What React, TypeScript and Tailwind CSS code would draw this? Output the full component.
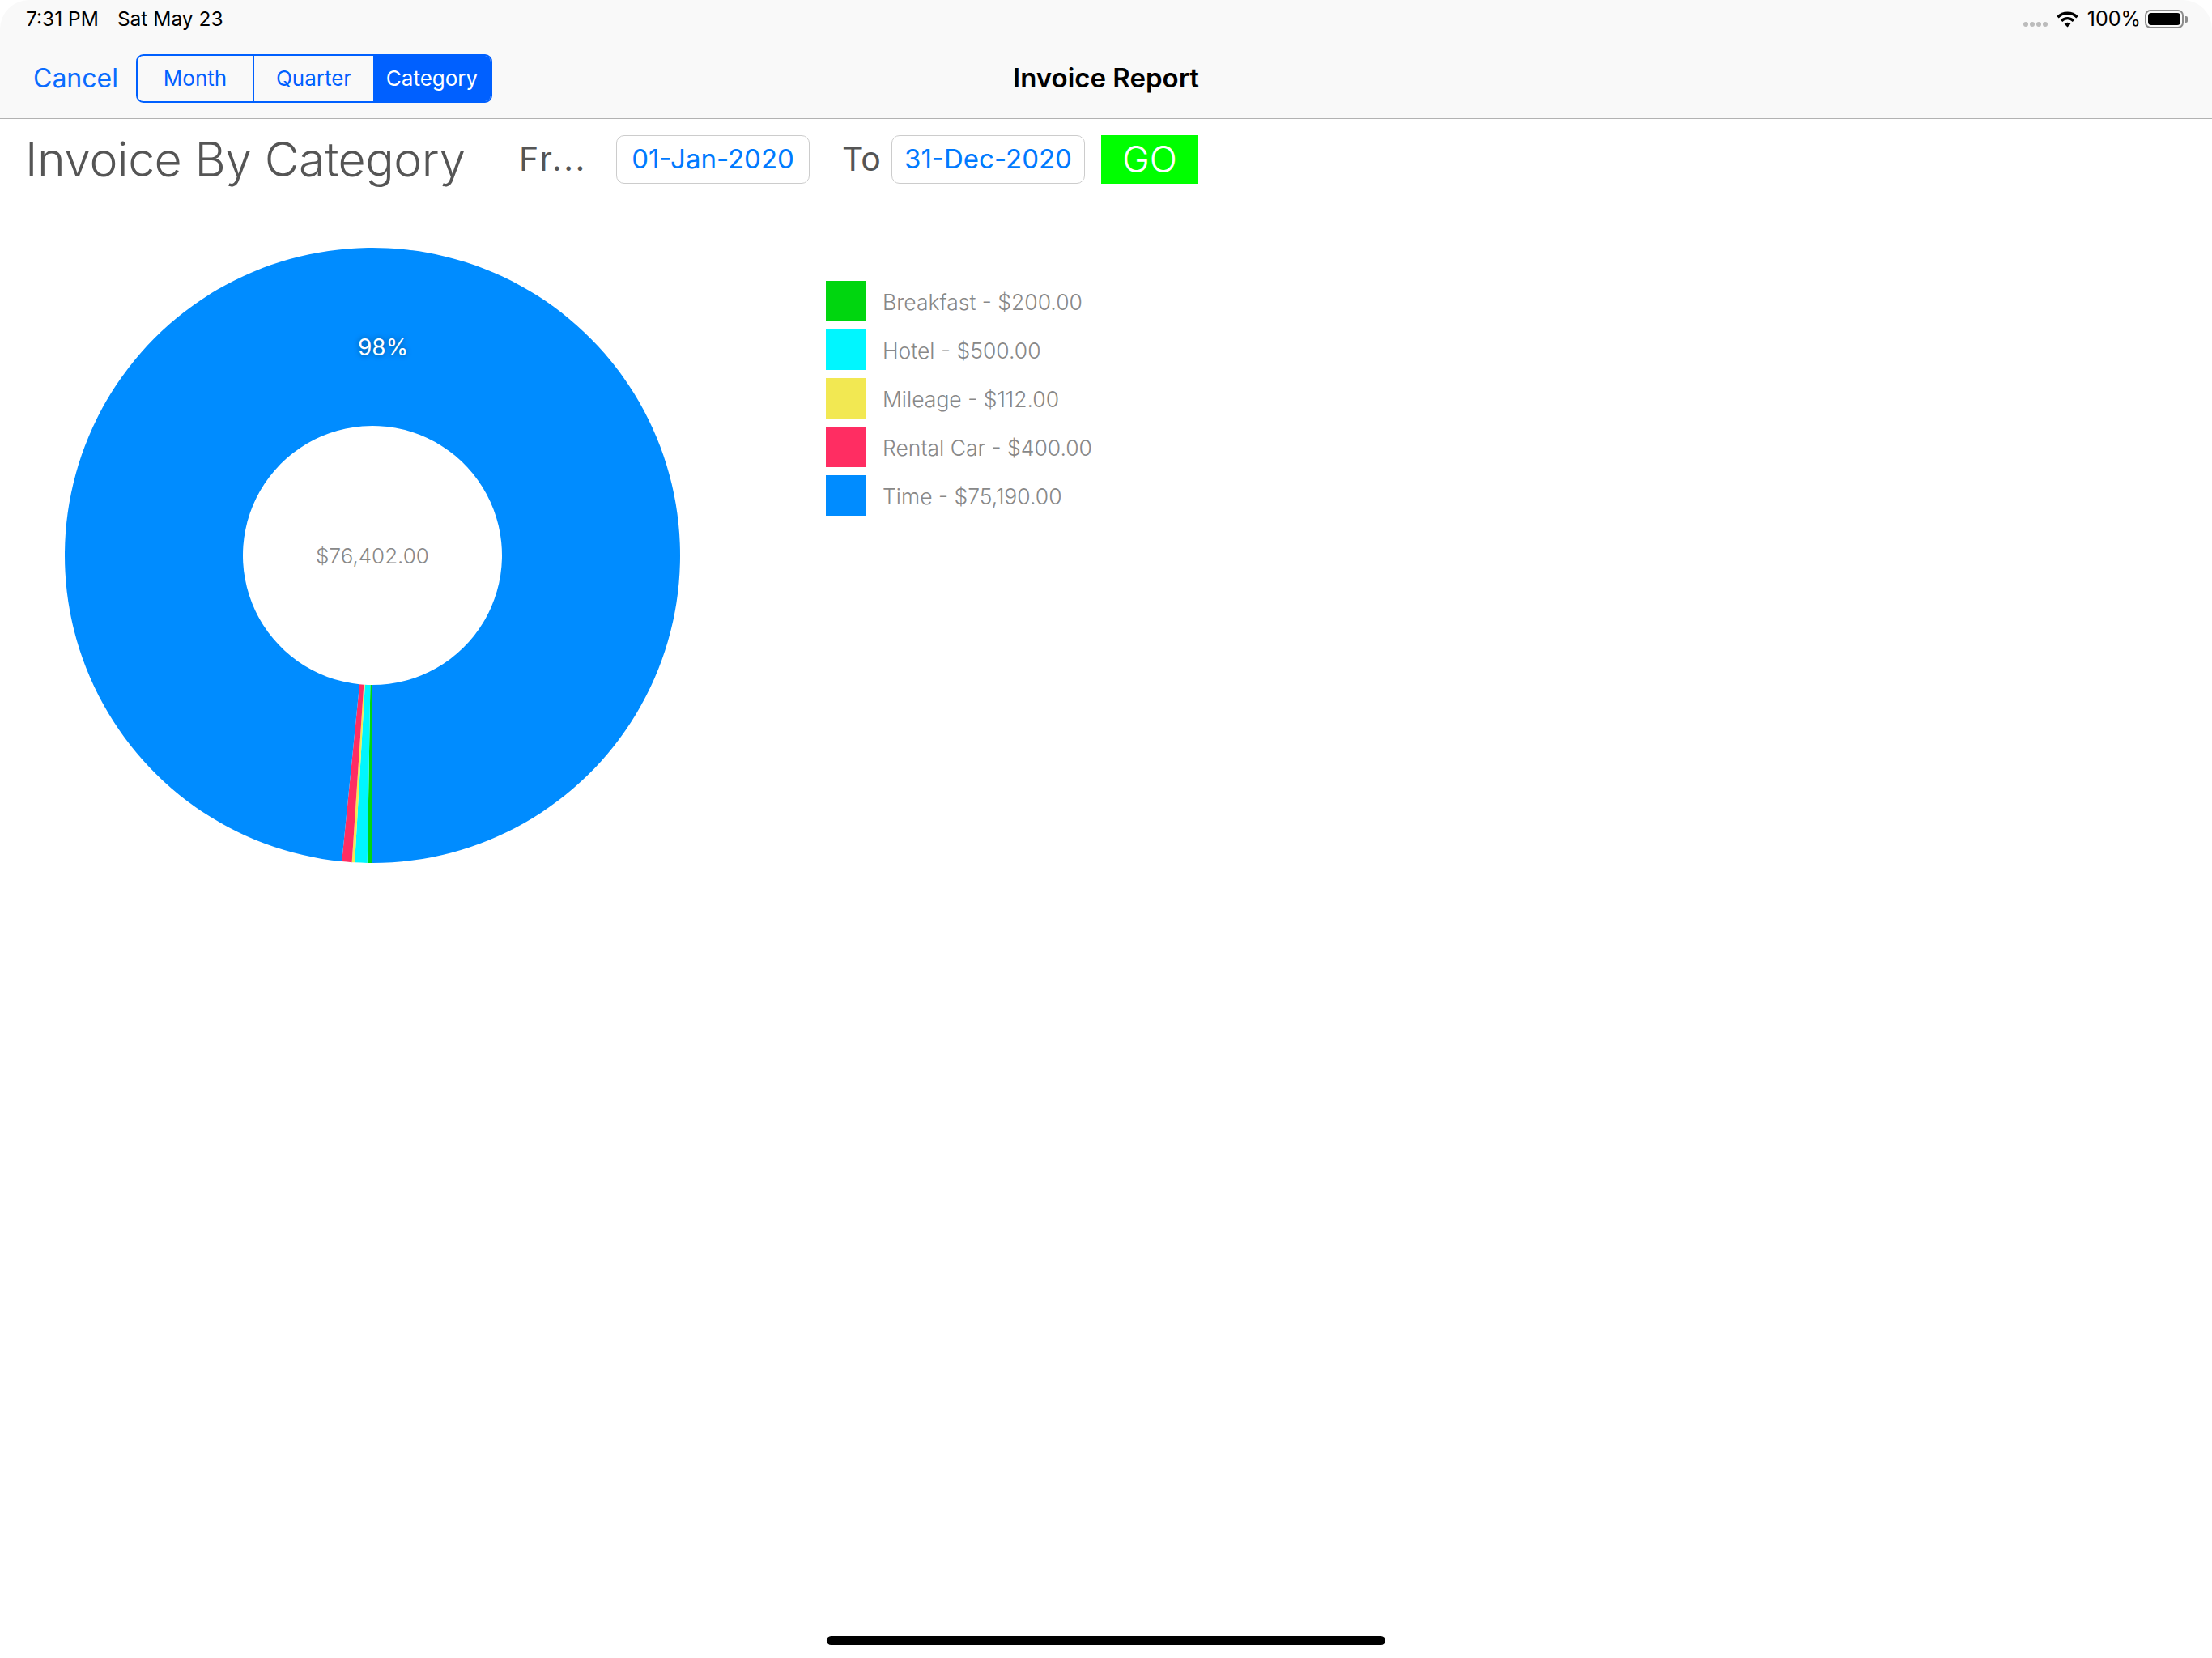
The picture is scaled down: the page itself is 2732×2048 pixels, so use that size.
const slices = [
  { name: "Breakfast", amount: "$200.00", value: 200, swatch: "bg-[#00d60f]", color: "#00d60f" },
  { name: "Hotel", amount: "$500.00", value: 500, swatch: "bg-[#00f6ff]", color: "#00f6ff" },
  { name: "Mileage", amount: "$112.00", value: 112, swatch: "bg-[#f2e852]", color: "#f2e852" },
  { name: "Rental Car", amount: "$400.00", value: 400, swatch: "bg-[#ff2d62]", color: "#ff2d62" },
  { name: "Time", amount: "$75,190.00", value: 75190, swatch: "bg-[#008cff]", color: "#008cff" },
];

const total = slices.reduce((sum, s) => sum + s.value, 0);

// angle runs clockwise from 6 o'clock, like the chart in the app
function point(r: number, angle: number) {
  return `${380 - r * Math.sin(angle)} ${380 + r * Math.cos(angle)}`;
}

function wedge(start: number, end: number) {
  const large = end - start > Math.PI ? 1 : 0;
  return `M ${point(380, start)} A 380 380 0 ${large} 1 ${point(380, end)} L ${point(160, end)} A 160 160 0 ${large} 0 ${point(160, start)} Z`;
}

function Donut() {
  let angle = 0;
  return (
    <div className="relative w-[760px] h-[760px] shrink-0">
      <svg width="760" height="760" viewBox="0 0 760 760">
        {slices.map((s) => {
          const start = angle;
          angle += (s.value / total) * Math.PI * 2;
          return <path key={s.name} d={wedge(start, angle)} fill={s.color} />;
        })}
      </svg>
      <span className="absolute left-[362px] top-[106px] text-[28px] leading-[34px] font-normal text-white [text-shadow:0_0_6px_#00508f]">
        98%
      </span>
      <span className="absolute inset-x-0 top-[364px] text-center text-[26px] leading-[34px] font-light text-[#888888]">
        $76,402.00
      </span>
    </div>
  );
}

function Wifi() {
  return (
    <svg width="27" height="20" viewBox="0 0 27 20" className="shrink-0">
      <path d="M1.5 7.2 A17 17 0 0 1 25.5 7.2" fill="none" stroke="#000" strokeWidth="3.4" />
      <path d="M6 11.7 A10.6 10.6 0 0 1 21 11.7" fill="none" stroke="#000" strokeWidth="3.4" />
      <path d="M9.6 15.4 A5.5 5.5 0 0 1 17.4 15.4 L13.5 19.6 Z" fill="#000" />
    </svg>
  );
}

function Battery() {
  return (
    <div className="flex items-center gap-[2px]">
      <div className="w-[48px] h-[23px] rounded-[7px] border-2 border-[#8c8c8c] p-[2px]">
        <div className="w-full h-full rounded-[4px] bg-black" />
      </div>
      <div className="w-[3px] h-[8px] rounded-r-[2px] bg-[#8c8c8c]" />
    </div>
  );
}

export default function App() {
  return (
    <div className="w-[2732px] h-[2048px] flex flex-col bg-white font-['Inter',sans-serif]">
      <header className="bg-[#f9f9f9] border-b border-[#b2b2b2] rounded-t-[36px]">
        {/* Status bar */}
        <div className="h-[47px] pl-[32px] pr-[30px] flex items-center justify-between text-[24px] text-black">
          <div className="flex gap-[23px] text-[24.5px]">
            <span>7:31 PM</span>
            <span>Sat May 23</span>
          </div>
          <div className="flex items-center">
            <div className="flex gap-[2px] mt-[13px] mr-[11px]">
              <div className="w-[6px] h-[6px] rounded-full bg-[#bcbcbc]" />
              <div className="w-[6px] h-[6px] rounded-full bg-[#bcbcbc]" />
              <div className="w-[6px] h-[6px] rounded-full bg-[#bcbcbc]" />
              <div className="w-[6px] h-[6px] rounded-full bg-[#bcbcbc]" />
            </div>
            <Wifi />
            <span className="ml-[11px] mr-[5px] text-[25px]">100%</span>
            <Battery />
          </div>
        </div>

        {/* Nav bar */}
        <div className="h-[99px] grid grid-cols-[1fr_auto_1fr] items-center">
          <div className="flex items-center pl-[41px]">
            <span className="w-[127px] text-[32px] text-[#0a6cff]">Cancel</span>
            <div className="w-[440px] h-[60px] flex rounded-[9px] border-2 border-[#0060ff] overflow-hidden text-[26px]">
              <div className="w-[144px] border-r-2 border-[#0060ff] flex items-center justify-center text-[#0060ff]">Month</div>
              <div className="w-[147px] flex items-center justify-center text-[#0060ff]">Quarter</div>
              <div className="flex-1 bg-[#0060ff] flex items-center justify-center text-white">Category</div>
            </div>
          </div>
          <h1 className="text-[33px] font-semibold text-black">Invoice Report</h1>
          <div />
        </div>
      </header>

      {/* Report toolbar */}
      <div className="mt-[20px] h-[60px] flex items-center text-[#555555]">
        <h2 className="ml-[31px] w-[610px] text-[59px] font-light tracking-[-0.5px] whitespace-nowrap">Invoice By Category</h2>
        <span className="w-[120px] text-[41px] tracking-[2.5px]">Fr...</span>
        <div className="w-[239px] h-[60px] rounded-[10px] border border-[#cccccc] flex items-center justify-center text-[33px] text-[#007aff]">01-Jan-2020</div>
        <span className="ml-[40px] w-[61px] text-[41px]">To</span>
        <div className="w-[239px] h-[60px] rounded-[10px] border border-[#cccccc] flex items-center justify-center text-[33px] text-[#007aff]">31-Dec-2020</div>
        <div className="ml-[20px] w-[120px] h-[60px] bg-[#00ff00] flex items-center justify-center text-[45px] font-light text-white">GO</div>
      </div>

      {/* Chart and legend */}
      <div className="mt-[79px] pl-[80px] flex items-start gap-[180px]">
        <Donut />
        <ul className="mt-[41px] flex flex-col gap-[10px]">
          {slices.map((s) => (
            <li key={s.name} className="flex items-center gap-[20px]">
              <div className={`w-[50px] h-[50px] ${s.swatch}`} />
              <span className="pt-[3px] text-[26.5px] font-light text-[#888888]">
                {s.name} - {s.amount}
              </span>
            </li>
          ))}
        </ul>
      </div>

      {/* Home indicator */}
      <div className="mt-auto mb-[16px] mx-auto w-[690px] h-[11px] rounded-full bg-black" />
    </div>
  );
}
